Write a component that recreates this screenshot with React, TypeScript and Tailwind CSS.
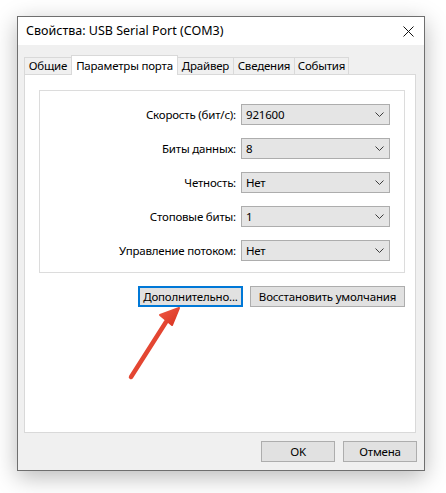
import React from 'react';

const FONT = { fontFamily: '"Noto Sans", "Liberation Sans", sans-serif' };

const ROWS: { label: string; value: string }[] = [
  { label: 'Скорость (бит/с):', value: '921600' },
  { label: 'Биты данных:', value: '8' },
  { label: 'Четность:', value: 'Нет' },
  { label: 'Стоповые биты:', value: '1' },
  { label: 'Управление потоком:', value: 'Нет' },
];

function Chevron() {
  return (
    <svg width="9" height="5" viewBox="0 0 9 5" className="shrink-0">
      <path d="M0.5 0.5 L4.5 4.5 L8.5 0.5" fill="none" stroke="#3c3c3c" strokeWidth="1" />
    </svg>
  );
}

function Combo({ value }: { value: string }) {
  return (
    <div className="flex h-[21px] w-[149px] items-center justify-between border border-[#adadad] bg-[#e5e5e5] pl-[4px] pr-[5px]">
      <span className="leading-none">{value}</span>
      <Chevron />
    </div>
  );
}

function Tab({
  label,
  width,
  active,
  className,
}: {
  label: string;
  width: number;
  active?: boolean;
  className?: string;
}) {
  if (active) {
    return (
      <div
        className="relative z-10 -mb-px flex h-[20px] items-start justify-center border-l border-r border-t border-[#d9d9d9] bg-white pt-[1px]"
        style={{ width }}
      >
        {label}
      </div>
    );
  }
  return (
    <div
      className={'flex h-[17px] items-center justify-center border-t border-[#d9d9d9] bg-[#f0f0f0] ' + (className ?? '')}
      style={{ width }}
    >
      {label}
    </div>
  );
}

function Button({
  children,
  width,
  focused,
}: {
  children: React.ReactNode;
  width: number;
  focused?: boolean;
}) {
  return (
    <div
      className={
        'flex h-[21px] items-center justify-center bg-[#e1e1e1] ' +
        (focused ? 'border-2 border-[#0078d7]' : 'border border-[#adadad]')
      }
      style={{ width }}
    >
      {children}
    </div>
  );
}

export default function App() {
  return (
    <div
      className="relative h-[493px] w-[446px] bg-white pl-[17px] pt-[16px] text-[11.5px] tracking-[-0.2px] text-black"
      style={FONT}
    >
      <div className="flex h-[455px] w-[408px] flex-col border border-[#6f6f6f] bg-[#f0f0f0] shadow-[0_6px_22px_rgba(0,0,0,0.28)]">
        {/* title bar */}
        <div className="flex h-[28px] items-center justify-between bg-white pl-[8px] pr-[10px]">
          <span className="text-[12.5px] tracking-normal">Свойства: USB Serial Port (COM3)</span>
          <svg width="11" height="11" viewBox="0 0 11 11">
            <path d="M0.5 0.5 L10.5 10.5 M10.5 0.5 L0.5 10.5" stroke="#111" strokeWidth="1" />
          </svg>
        </div>

        {/* tabs */}
        <div className="mt-[10px] flex items-end pl-[6px]">
          <Tab label="Общие" width={47} className="border-l" />
          <Tab label="Параметры порта" width={107} active />
          <Tab label="Драйвер" width={55} />
          <Tab label="Сведения" width={61} className="border-l" />
          <Tab label="События" width={55} className="border-l border-r" />
        </div>

        {/* panel */}
        <div className="ml-[6px] flex h-[359px] w-[392px] flex-col border border-[#d9d9d9] bg-white pl-[14px] pr-[10px] pt-[15px]">
          <div className="flex h-[183px] flex-col gap-[13px] border border-[#dcdcdc] pr-[14px] pt-[13px]">
            {ROWS.map((r) => (
              <div key={r.label} className="flex items-center justify-end gap-[5px]">
                <span>{r.label}</span>
                <Combo value={r.value} />
              </div>
            ))}
          </div>
          <div className="mt-[13px] flex justify-end gap-[7px]">
            <Button width={105} focused>
              Дополнительно...
            </Button>
            <Button width={155}>Восстановить умолчания</Button>
          </div>
        </div>

        {/* footer */}
        <div className="mt-[8px] flex justify-end gap-[8px] pr-[7px]">
          <Button width={74}>OK</Button>
          <Button width={74}>Отмена</Button>
        </div>
      </div>

      {/* red annotation arrow */}
      <svg className="pointer-events-none absolute left-0 top-0" width="446" height="493" viewBox="0 0 446 493">
        <defs>
          <linearGradient id="arr" x1="0" y1="0" x2="1" y2="1">
            <stop offset="0" stopColor="#ef5a45" />
            <stop offset="1" stopColor="#d8321f" />
          </linearGradient>
        </defs>
        <path d="M131 377 L166 322" stroke="url(#arr)" strokeWidth="4.5" strokeLinecap="round" fill="none" />
        <path d="M179 308 L160 315 L172 325 Z" fill="url(#arr)" stroke="url(#arr)" strokeWidth="2" strokeLinejoin="round" />
      </svg>
    </div>
  );
}
